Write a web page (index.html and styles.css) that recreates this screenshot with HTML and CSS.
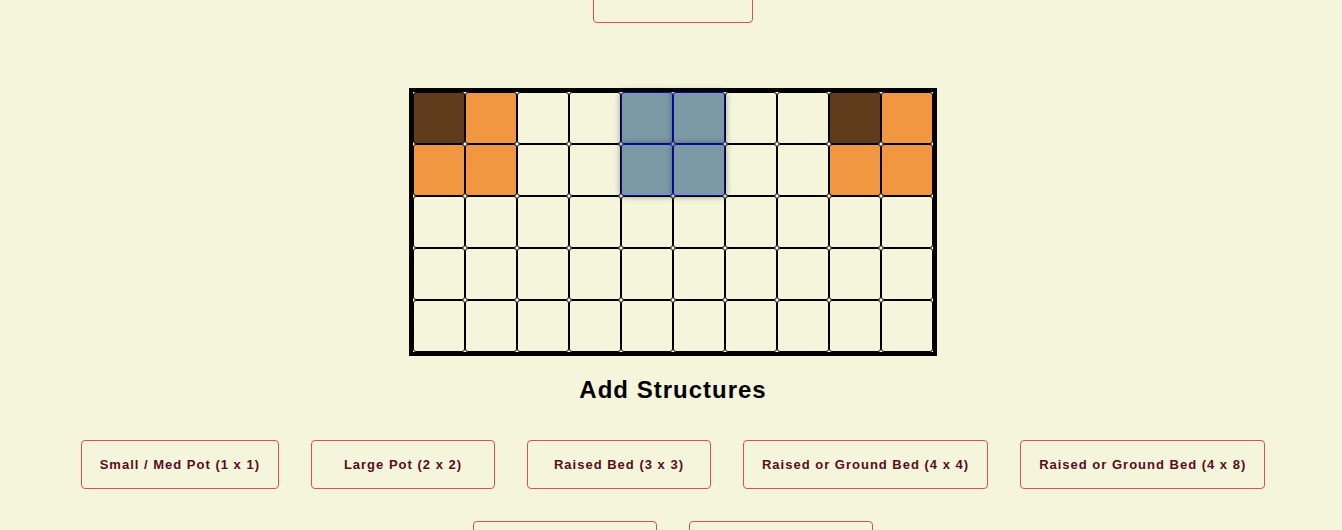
FILE: index.html
```html
<!DOCTYPE html>
<html>
<head>
<meta charset="utf-8">
<link rel="stylesheet" href="styles.css">
</head>
<body>
<div class="page">
  <div class="top-actions">
    <button class="btn top-btn">Design Grid (10 x 5)</button>
  </div>
  <div class="garden">
    <div class="cell brown"></div><div class="cell orange"></div><div class="cell"></div><div class="cell"></div><div class="cell blue"></div><div class="cell blue"></div><div class="cell"></div><div class="cell"></div><div class="cell brown"></div><div class="cell orange"></div>
    <div class="cell orange"></div><div class="cell orange"></div><div class="cell"></div><div class="cell"></div><div class="cell blue"></div><div class="cell blue"></div><div class="cell"></div><div class="cell"></div><div class="cell orange"></div><div class="cell orange"></div>
    <div class="cell"></div><div class="cell"></div><div class="cell"></div><div class="cell"></div><div class="cell"></div><div class="cell"></div><div class="cell"></div><div class="cell"></div><div class="cell"></div><div class="cell"></div>
    <div class="cell"></div><div class="cell"></div><div class="cell"></div><div class="cell"></div><div class="cell"></div><div class="cell"></div><div class="cell"></div><div class="cell"></div><div class="cell"></div><div class="cell"></div>
    <div class="cell"></div><div class="cell"></div><div class="cell"></div><div class="cell"></div><div class="cell"></div><div class="cell"></div><div class="cell"></div><div class="cell"></div><div class="cell"></div><div class="cell"></div>
  </div>
  <h2 class="section-title">Add Structures</h2>
  <div class="structures">
    <button class="btn">Small / Med Pot (1 x 1)</button>
    <button class="btn">Large Pot (2 x 2)</button>
    <button class="btn">Raised Bed (3 x 3)</button>
    <button class="btn">Raised or Ground Bed (4 x 4)</button>
    <button class="btn">Raised or Ground Bed (4 x 8)</button>
    <button class="btn">Trellis (1 x 4)</button>
    <button class="btn">Path (1 x 1)</button>
  </div>
</div>
</body>
</html>
```

FILE: styles.css
```css
html, body {
  margin: 0;
  padding: 0;
  background: #f5f5dc;
  overflow: hidden;
}
body {
  font-family: "Liberation Sans", Arial, sans-serif;
}
.page {
  display: flex;
  flex-direction: column;
  align-items: center;
  padding-left: 4px;
}
.top-actions {
  margin-top: -26px;
  display: flex;
  justify-content: center;
}
.btn {
  box-sizing: border-box;
  height: 49px;
  min-width: 184px;
  padding: 0 18px;
  background: transparent;
  border: 1px solid #de4f5c;
  border-radius: 4px;
  color: #5a0b1c;
  font-family: "Liberation Sans", Arial, sans-serif;
  font-weight: bold;
  font-size: 13px;
  letter-spacing: 1px;
  white-space: nowrap;
}
.top-btn {
  min-width: 160px;
  width: 160px;
  padding: 0 6px;
  line-height: 36px;
  display: flex;
  align-items: flex-start;
  justify-content: center;
}
.garden {
  margin-top: 65px;
  display: grid;
  grid-template-columns: repeat(10, 52px);
  grid-auto-rows: 52px;
  border: 4px solid #000;
  background: #f5f5dc;
}
.cell {
  box-sizing: border-box;
  border: 1px solid #000;
  border-radius: 3px;
  background: #f5f5dc;
}
.cell.brown { background: #603b1c; }
.cell.orange { background: #f29741; }
.cell.blue {
  background: #7b9aa6;
  border-color: #0a0aa8;
  box-shadow: 0 0 7px rgba(0, 0, 0, 0.45);
  position: relative;
  z-index: 1;
}
.section-title {
  margin: 20px 0 0;
  font-size: 24px;
  line-height: 28px;
  letter-spacing: 1px;
  font-weight: bold;
  color: #000;
}
.structures {
  margin-top: 36px;
  align-self: stretch;
  display: flex;
  flex-wrap: wrap;
  justify-content: center;
  gap: 32px;
}
```
